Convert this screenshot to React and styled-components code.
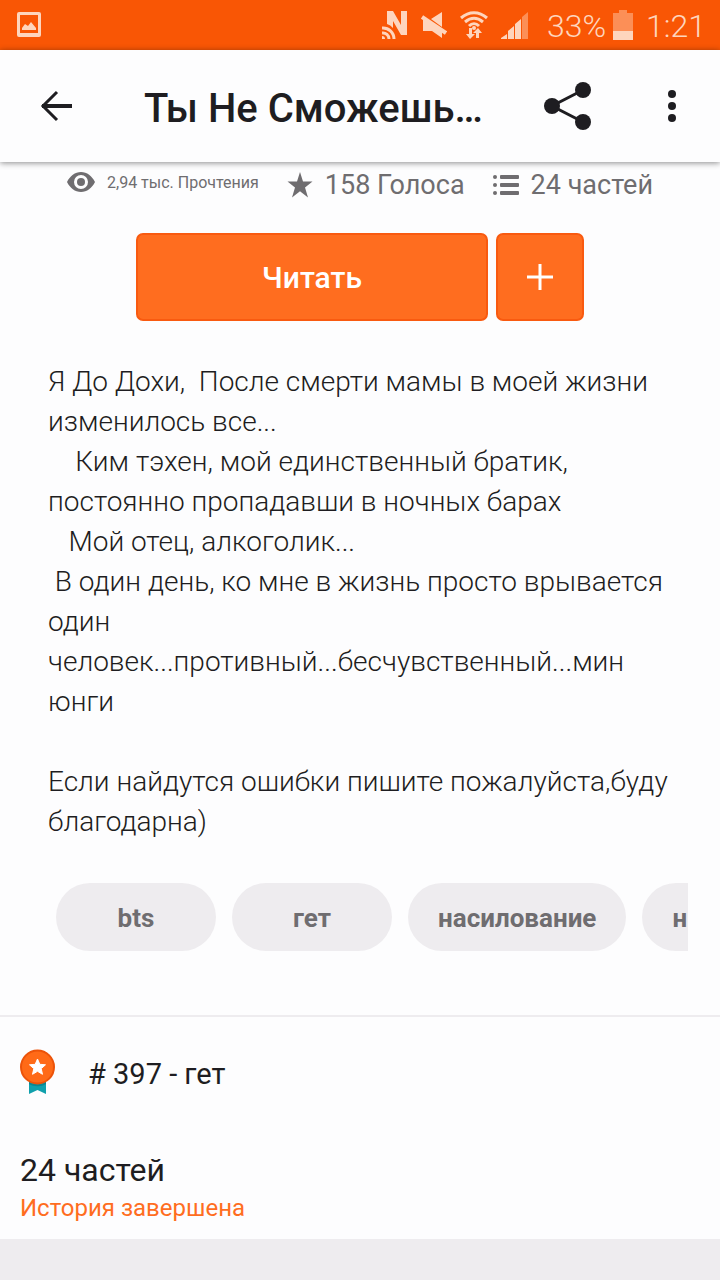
import React from 'react';
import styled, { createGlobalStyle } from 'styled-components';

const GlobalStyle = createGlobalStyle`
  * {
    box-sizing: border-box;
  }
  body {
    margin: 0;
    background: #fdfdfe;
    color: #1e1d21;
    font-family: Roboto, 'Noto Sans', sans-serif;
  }
  button {
    font-family: inherit;
    cursor: pointer;
  }
  svg {
    display: block;
    flex-shrink: 0;
  }
`;

const Page = styled.div`
  display: flex;
  flex-direction: column;
  min-height: 100vh;
`;

const StatusBar = styled.div`
  display: flex;
  align-items: center;
  justify-content: space-between;
  height: 50px;
  padding: 0 14px 0 16px;
  background: #f95605;
  color: #fed5bd;
`;

const StatusGroup = styled.div`
  display: flex;
  align-items: center;
  gap: 13px;
`;

const Battery = styled.div`
  display: flex;
  align-items: center;
  gap: 7px;
  margin-left: 6px;
`;

const StatusText = styled.span`
  padding-top: 2px;
  font-size: 32px;
  font-weight: 300;
  line-height: 48px;
`;

const Header = styled.header`
  position: sticky;
  top: 0;
  z-index: 1;
  display: flex;
  align-items: center;
  height: 112px;
  padding: 0 16px 0 24px;
  background: #fdfdfe;
  box-shadow: 0 1px 6px rgba(0, 0, 0, 0.45);
`;

const IconButton = styled.button`
  display: flex;
  align-items: center;
  justify-content: center;
  width: 64px;
  height: 64px;
  padding: 0;
  border: none;
  background: none;
  color: #1e1d21;
`;

const HeaderActions = styled.div`
  display: flex;
  gap: 40px;
`;

const Title = styled.h1`
  flex: 1;
  min-width: 0;
  margin: 0 0 0 56px;
  padding-top: 6px;
  overflow: hidden;
  font-size: 40px;
  font-weight: 500;
  line-height: 48px;
  white-space: nowrap;
  text-overflow: ellipsis;
`;

const Stats = styled.div`
  display: flex;
  justify-content: center;
  gap: 28px;
  padding-top: 8px;
  color: #6f6d70;
`;

const Stat = styled.div`
  display: flex;
  align-items: center;
  gap: 12px;
  height: ${(props) => (props.$small ? '24px' : '30px')};
  font-size: ${(props) => (props.$small ? '16px' : '27px')};
  white-space: nowrap;
`;

const Actions = styled.div`
  display: flex;
  gap: 8px;
  width: 100%;
  max-width: 448px;
  margin: 33px auto 0;
`;

const ActionButton = styled.button`
  display: flex;
  align-items: center;
  justify-content: center;
  flex: ${(props) => (props.$square ? '0 0 88px' : '1')};
  height: 88px;
  padding: 0;
  border: 2px solid #f95a10;
  border-radius: 7px;
  background: #ff6d1f;
  color: #fff;
  font-size: 30px;
  font-weight: 500;
`;

const Description = styled.p`
  margin: 41px 40px 0 48px;
  font-size: 28px;
  font-weight: 300;
  line-height: 40px;
  white-space: pre-wrap;
`;

const Tags = styled.div`
  display: flex;
  gap: 16px;
  margin: 41px 32px 64px 48px;
  padding-left: 8px;
  overflow: hidden;
`;

const Tag = styled.button`
  flex-shrink: 0;
  min-width: 160px;
  height: 68px;
  padding: 2px 30px 0;
  border: none;
  border-radius: 34px;
  background: #eeecef;
  color: #6f6d70;
  font-size: 26px;
  font-weight: 700;
  text-align: ${(props) => (props.$start ? 'left' : 'center')};
`;

const Rank = styled.div`
  display: flex;
  align-items: center;
  gap: 32px;
  height: 116px;
  padding: 0 20px;
  border-top: 2px solid #eeecef;
  font-size: 29px;
`;

const Parts = styled.section`
  padding: 19px 20px 13px;
`;

const PartsTitle = styled.h2`
  margin: 0;
  font-size: 32px;
  font-weight: 400;
  line-height: 40px;
`;

const PartsStatus = styled.p`
  margin: 0;
  color: #ff6d1f;
  font-size: 24px;
  line-height: 36px;
`;

const Footer = styled.div`
  flex: 1;
  min-height: 41px;
  background: #eeecef;
`;

const description = `Я До Дохи,  После смерти мамы в моей жизни изменилось все...
    Ким тэхен, мой единственный братик, постоянно пропадавши в ночных барах
   Мой отец, алкоголик...
 В один день, ко мне в жизнь просто врывается один человек...противный...бесчувственный...мин юнги

Если найдутся ошибки пишите пожалуйста,буду благодарна)`;

const tags = ['bts', 'гет', 'насилование'];

const ImageIcon = () => (
  <svg width="26" height="26" viewBox="0 0 26 26">
    <path
      fill="currentColor"
      fillRule="evenodd"
      d="M3 0h20a2 2 0 0 1 2 2v21a2 2 0 0 1-2 2H3a2 2 0 0 1-2-2V2a2 2 0 0 1 2-2zm1 3v18h18V3z"
    />
    <path fill="currentColor" d="M6 18v-2l3-4 3 2 3-4 5 6v2z" />
  </svg>
);

const NfcIcon = () => (
  <svg width="26" height="28" viewBox="0 0 26 28">
    <path fill="currentColor" d="M5 0h6l8 14V0h6v24h-6L11 10v7a14 14 0 0 0-6-4z" />
    <g fill="none" stroke="currentColor" strokeWidth="3">
      <path d="M0 17a11 11 0 0 1 12 11M0 22a6 6 0 0 1 7 6" />
    </g>
    <path fill="currentColor" d="M0 25a3 3 0 0 1 3 3H0z" />
  </svg>
);

const MuteIcon = () => (
  <svg width="26" height="26" viewBox="0 0 26 26">
    <path fill="currentColor" d="M10 7l11-7v15zM2 8h4l15 10v8l-10-7H2z" />
    <path stroke="currentColor" strokeWidth="4" d="M1 5l24 16" />
  </svg>
);

const WifiIcon = () => (
  <svg width="28" height="28" viewBox="0 0 28 28">
    <g fill="none" stroke="currentColor" strokeWidth="3">
      <path d="M1 7c8-7 18-7 26 0M5 11c6-5 12-5 18 0M9 15c3-3 7-3 10 0" />
    </g>
    <path fill="currentColor" d="M9 17h3v6h3l-5 5-4-5h3zM16 27v-5h-3l5-5 4 5h-3v5z" />
    <circle cx="14" cy="17" r="2" fill="currentColor" />
  </svg>
);

const SignalIcon = () => (
  <svg width="27" height="27" viewBox="0 0 27 27">
    <path fill="currentColor" d="M0 27v-1l6-4v5zM7 27v-8l6-5v13zM14 27V12l6-5v20z" />
    <path fill="currentColor" opacity="0.45" d="M21 27V5l6-5v27z" />
  </svg>
);

const BatteryIcon = () => (
  <svg width="20" height="30" viewBox="0 0 20 30">
    <path fill="currentColor" opacity="0.45" d="M0 3h6V0h8v3h6v18H0z" />
    <path fill="currentColor" d="M0 21h20v9H0z" />
  </svg>
);

const BackIcon = () => (
  <svg width="32" height="32" viewBox="0 0 32 32" fill="none" stroke="currentColor">
    <path d="M32 16H2" strokeWidth="4" />
    <path d="M17 2L3 16l14 14" strokeWidth="3" />
  </svg>
);

const ShareIcon = () => (
  <svg width="48" height="48" viewBox="0 0 48 48" fill="currentColor">
    <path d="M39 8L8 24l31 16" fill="none" stroke="currentColor" strokeWidth="3" />
    <circle cx="8" cy="24" r="8" />
    <circle cx="39" cy="8" r="8" />
    <circle cx="39" cy="40" r="8" />
  </svg>
);

const MoreIcon = () => (
  <svg width="8" height="32" viewBox="0 0 8 32" fill="currentColor">
    <circle cx="4" cy="4" r="4" />
    <circle cx="4" cy="16" r="4" />
    <circle cx="4" cy="28" r="4" />
  </svg>
);

const EyeIcon = () => (
  <svg width="28" height="22" viewBox="0 0 28 22">
    <path
      fill="currentColor"
      fillRule="evenodd"
      d="M14 1c6 0 11 4 14 10-3 6-8 10-14 10S3 17 0 11C3 5 8 1 14 1zm0 3a7 7 0 1 0 0 14 7 7 0 0 0 0-14z"
    />
    <circle cx="14" cy="11" r="4" fill="currentColor" />
  </svg>
);

const StarIcon = () => (
  <svg width="26" height="26" viewBox="0 0 26 26">
    <path fill="currentColor" d="M13 0l3 9.500h9.500l-7.500 6 3 10-8-6.200-8 6.200 3-10-7.500-6H10z" />
  </svg>
);

const ListIcon = () => (
  <svg width="26" height="22" viewBox="0 0 26 22" fill="currentColor">
    <circle cx="2" cy="3" r="2" />
    <circle cx="2" cy="11" r="2" />
    <circle cx="2" cy="19" r="2" />
    <rect x="7" y="1" width="19" height="4" rx="1" />
    <rect x="7" y="9" width="19" height="4" rx="1" />
    <rect x="7" y="17" width="19" height="4" rx="1" />
  </svg>
);

const PlusIcon = () => (
  <svg width="26" height="26" viewBox="0 0 26 26" stroke="currentColor" strokeWidth="3">
    <path d="M13 0v26M0 13h26" />
  </svg>
);

const MedalIcon = () => (
  <svg width="36" height="50" viewBox="0 0 36 50">
    <path fill="#10a0ac" d="M9 30h17v15l-8.500-4L9 45z" />
    <path fill="#0b8793" d="M9 33c5 3 12 3 17 0v2c-5 3-12 3-17 0z" />
    <circle cx="17.500" cy="18" r="16.500" fill="#ff6a17" stroke="#ec5309" strokeWidth="2" />
    <path
      fill="#fff"
      stroke="#fff"
      strokeLinejoin="round"
      d="M17.500 10l2.300 5.300 5.700.5-4.300 3.800 1.300 5.700-5-3-5 3 1.300-5.700-4.300-3.800 5.700-.5z"
    />
  </svg>
);

const App = () => {
  return (
    <Page>
      <GlobalStyle />
      <StatusBar>
        <ImageIcon />
        <StatusGroup>
          <NfcIcon />
          <MuteIcon />
          <WifiIcon />
          <SignalIcon />
          <Battery>
            <StatusText>33%</StatusText>
            <BatteryIcon />
          </Battery>
          <StatusText>1:21</StatusText>
        </StatusGroup>
      </StatusBar>

      <Header>
        <IconButton aria-label="Назад">
          <BackIcon />
        </IconButton>
        <Title>Ты Не Сможешь…</Title>
        <HeaderActions>
          <IconButton aria-label="Поделиться">
            <ShareIcon />
          </IconButton>
          <IconButton aria-label="Ещё">
            <MoreIcon />
          </IconButton>
        </HeaderActions>
      </Header>

      <main>
        <Stats>
          <Stat $small>
            <EyeIcon />
            <span>2,94 тыс. Прочтения</span>
          </Stat>
          <Stat>
            <StarIcon />
            <span>158 Голоса</span>
          </Stat>
          <Stat>
            <ListIcon />
            <span>24 частей</span>
          </Stat>
        </Stats>

        <Actions>
          <ActionButton>Читать</ActionButton>
          <ActionButton $square aria-label="Добавить">
            <PlusIcon />
          </ActionButton>
        </Actions>

        <Description>{description}</Description>

        <Tags>
          {tags.map((tag) => (
            <Tag key={tag}>{tag}</Tag>
          ))}
          <Tag $start>н</Tag>
        </Tags>

        <Rank>
          <MedalIcon />
          <span># 397 - гет</span>
        </Rank>

        <Parts>
          <PartsTitle>24 частей</PartsTitle>
          <PartsStatus>История завершена</PartsStatus>
        </Parts>
      </main>

      <Footer />
    </Page>
  );
};

export default App;
